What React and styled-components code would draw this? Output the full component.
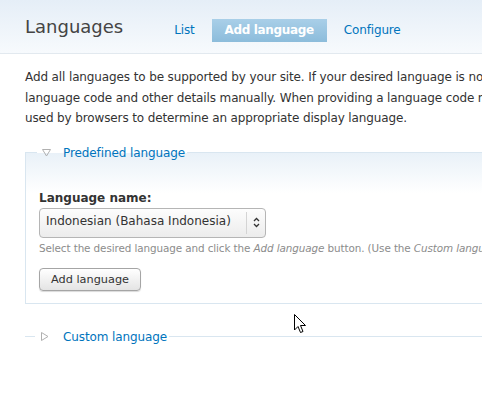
import styled, { createGlobalStyle } from "styled-components";

const GlobalStyle = createGlobalStyle`
  html, body {
    margin: 0;
    padding: 0;
    background: #fff;
    overflow: hidden;
  }
  body {
    font-family: "DejaVu Sans", "Liberation Sans", sans-serif;
    color: #333;
  }
`;

const Page = styled.div`
  position: relative;
  width: 1000px;
  height: 396px;
`;

const Header = styled.div`
  height: 53px;
  border-bottom: 1px solid #e2e9ef;
  background: linear-gradient(to bottom, #e5eef7 0%, #f7fafd 100%);
  display: flex;
  align-items: flex-start;
  padding-left: 25px;
`;

const Title = styled.h1`
  margin: 15px 0 0;
  font-size: 18px;
  font-weight: normal;
  line-height: 24px;
  color: #444;
`;

const Tabs = styled.ul`
  list-style: none;
  margin: 19px 0 0 38px;
  padding: 0;
  display: flex;
  gap: 4px;
`;

const Tab = styled.li`
  height: 23px;
  line-height: 23px;
  padding: 0 13px;
  font-size: 12px;
  letter-spacing: ${(p) => (p.$active ? "-0.35px" : "-0.15px")};
  font-weight: ${(p) => (p.$active ? "bold" : "normal")};
  color: ${(p) => (p.$active ? "#fff" : "#0074bd")};
  background: ${(p) =>
    p.$active ? "linear-gradient(to bottom, #a9cfe8 0%, #8cbcdb 100%)" : "none"};
`;

const Content = styled.div`
  padding: 13px 0 0 25px;
`;

const Help = styled.p`
  margin: 0 0 14px;
  font-size: 12px;
  letter-spacing: -0.12px;
  line-height: 20.5px;
  white-space: nowrap;
`;

const Fieldset = styled.fieldset`
  margin: 0;
  padding: 0 12px 12px 13px;
  border: 1px solid #d9e6f0;
  background: linear-gradient(to bottom, #e9f1f8 0px, #ffffff 40px);
  background-clip: padding-box;
`;

const Collapsed = styled.fieldset`
  margin: 23px 0 0;
  padding: 0 12px;
  border: 0;
  border-top: 1px solid #d9e6f0;
`;

const Legend = styled.legend`
  padding: 0 2px;
  margin-left: -2px;
  font-size: 12px;
  letter-spacing: -0.1px;
  line-height: 20px;
  color: #0074bd;
  display: flex;
  align-items: center;
`;

const Arrow = styled.svg`
  width: 9px;
  height: 9px;
  margin: 0 ${(p) => p.$gap}px 0 3px;
  flex: none;
`;

const Label = styled.label`
  display: block;
  margin-top: 26px;
  font-size: 12px;
  font-weight: bold;
  line-height: 18px;
  color: #333;
`;

const Select = styled.div`
  margin-top: 1px;
  width: 225px;
  height: 28px;
  display: flex;
  border: 1px solid #b5b5b5;
  border-radius: 4px;
  background: linear-gradient(to bottom, #fdfdfd 0%, #ececec 100%);
`;

const SelectText = styled.div`
  flex: 1;
  padding-left: 6px;
  line-height: 25px;
  font-size: 12px;
  white-space: nowrap;
  overflow: hidden;
  color: #333;
`;

const SelectToggle = styled.div`
  width: 18px;
  margin: 3px 0;
  border-left: 1px solid #d4d4d4;
  display: flex;
  align-items: center;
  justify-content: center;
`;

const Description = styled.div`
  margin-top: 3px;
  font-size: 10.4px;
  letter-spacing: -0.1px;
  line-height: 15px;
  color: #8c8c8c;
  white-space: nowrap;
`;

const Button = styled.button`
  display: block;
  margin-top: 12px;
  height: 23px;
  padding: 0 11px;
  font-family: inherit;
  font-size: 11.3px;
  color: #333;
  border: 1px solid #a5a5a5;
  border-radius: 4px;
  background: linear-gradient(to bottom, #ffffff 0%, #e4e4e4 100%);
  box-shadow: 0 1px 1px rgba(0, 0, 0, 0.15);
`;

const Cursor = styled.svg`
  position: absolute;
  left: 294px;
  top: 314px;
  width: 13px;
  height: 20px;
`;

export default function App() {
  return (
    <Page>
      <GlobalStyle />
      <Header>
        <Title>Languages</Title>
        <Tabs>
          <Tab>List</Tab>
          <Tab $active>Add language</Tab>
          <Tab>Configure</Tab>
        </Tabs>
      </Header>
      <Content>
        <Help>
          Add all languages to be supported by your site. If your desired language is not available in the <em>Language name</em> drop-down, click <em>Custom language</em> and provide a
          <br />
          language code and other details manually. When providing a language code manually, be sure to enter a standardized language code, since this code may be
          <br />
          used by browsers to determine an appropriate display language.
        </Help>

        <Fieldset>
          <Legend>
            <Arrow viewBox="0 0 9 9" $gap={12}>
              <path d="M0.5 1.5 H8.5 L4.5 8 Z" fill="none" stroke="#b0b0b0" strokeWidth="1" />
            </Arrow>
            Predefined language
          </Legend>
          <Label>Language name:</Label>
          <Select>
            <SelectText>Indonesian (Bahasa Indonesia)</SelectText>
            <SelectToggle>
              <svg width="7" height="11" viewBox="0 0 7 11">
                <path d="M1 4 L3.5 1.5 L6 4 M1 7 L3.5 9.5 L6 7" fill="none" stroke="#333" strokeWidth="1.3" />
              </svg>
            </SelectToggle>
          </Select>
          <Description>
            Select the desired language and click the <em>Add language</em> button. (Use the <em>Custom language</em> options if your desired language does not appear in this list.)
          </Description>
          <Button>Add language</Button>
        </Fieldset>

        <Collapsed>
          <Legend>
            <Arrow viewBox="0 0 9 9" $gap={14}>
              <path d="M1.5 0.5 V8.5 L8 4.5 Z" fill="none" stroke="#b0b0b0" strokeWidth="1" />
            </Arrow>
            Custom language
          </Legend>
        </Collapsed>
      </Content>

      <Cursor viewBox="0 0 13 20">
        <path
          d="M0.5 0.5 V16 L4 12.5 L6.5 18.5 L9 17.5 L6.5 11.5 H11.5 Z"
          fill="#fff"
          stroke="#000"
          strokeWidth="1"
        />
      </Cursor>
    </Page>
  );
}
